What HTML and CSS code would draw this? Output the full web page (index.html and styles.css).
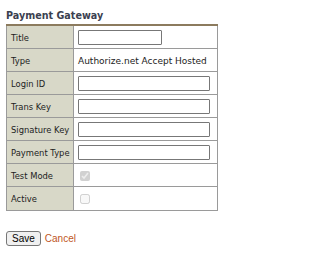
FILE: index.html
```html
<!DOCTYPE html>
<html>
<head>
<meta charset="utf-8">
<link rel="stylesheet" href="styles.css">
</head>
<body>
<div class="page">
  <h3 class="heading">Payment Gateway</h3>
  <table class="form-table">
    <colgroup><col class="col-label"><col class="col-value"></colgroup>
    <tr><td class="label">Title</td><td class="value"><input class="field short" type="text"></td></tr>
    <tr><td class="label">Type</td><td class="value">Authorize.net Accept Hosted</td></tr>
    <tr><td class="label">Login ID</td><td class="value"><input class="field" type="text"></td></tr>
    <tr><td class="label">Trans Key</td><td class="value"><input class="field" type="text"></td></tr>
    <tr><td class="label">Signature Key</td><td class="value"><input class="field" type="text"></td></tr>
    <tr><td class="label">Payment Type</td><td class="value"><input class="field" type="text"></td></tr>
    <tr><td class="label">Test Mode</td><td class="value"><input class="check" type="checkbox" checked disabled></td></tr>
    <tr class="last"><td class="label">Active</td><td class="value"><input class="check" type="checkbox" disabled></td></tr>
  </table>
  <div class="actions">
    <button class="save" type="button">Save</button>
    <a class="cancel" href="#">Cancel</a>
  </div>
</div>
</body>
</html>
```
FILE: styles.css
```css
html, body { margin: 0; padding: 0; background: #fff; }
.page { padding: 6px; font-family: "DejaVu Sans", Verdana, sans-serif; }
.heading { margin: 4px 0 3px; font-size: 9.6px; line-height: 11px; font-weight: bold; color: #3b4150; }
.form-table { border-collapse: collapse; table-layout: fixed; width: 212px; border: 1px solid #9a9a9a; border-top: 2px solid #8c7b5e; font-size: 9px; color: #222; }
.col-label { width: 67px; }
.form-table td { border: 1px solid #9a9a9a; padding: 4px 4px 3px; height: 15px; white-space: nowrap; overflow: hidden; }
.form-table .last td { height: 16px; }
.label { background: #d8d8c8; font-size: 8.4px; }
.value { background: #fff; }
.field { width: 130px; height: 13px; padding: 0; margin: 0; border: 1px solid #777; border-radius: 1px; font-size: 9px; box-sizing: content-box; display: block; }
.field.short { width: 82px; }
.check { margin: 0 0 0 2px; width: 10px; height: 10px; display: block; }
.actions { margin-top: 20px; display: flex; align-items: center; gap: 4px; }
.save { font-family: "Liberation Sans", Arial, sans-serif; font-size: 10px; padding: 1px 5px; margin: 0; border: 1px solid #777; border-radius: 3px; background: #f0f0f0; color: #000; }
.cancel { font-family: "Liberation Sans", Arial, sans-serif; font-size: 10px; color: #c0561e; text-decoration: none; }
```
